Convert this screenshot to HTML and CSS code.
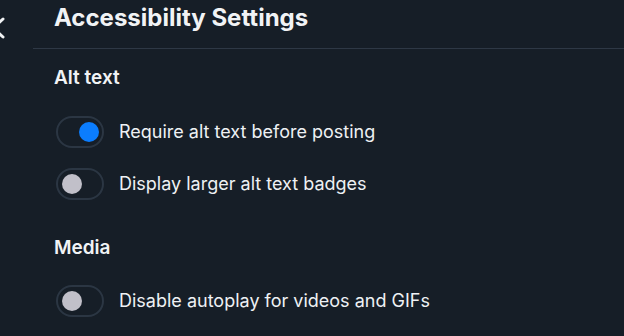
FILE: index.html
```html
<!DOCTYPE html>
<html>
<head>
<meta charset="utf-8">
<link rel="stylesheet" href="styles.css">
</head>
<body>
<div class="page">
  <aside class="rail">
    <svg class="back" width="20" height="40" viewBox="0 0 20 40"><path d="M3 19 L-7 28 L3 37" fill="none" stroke="#f1f3f5" stroke-width="3" stroke-linecap="round" stroke-linejoin="round"/></svg>
  </aside>
  <main class="main">
    <header class="header">
      <h1 class="title">Accessibility Settings</h1>
    </header>
    <section class="section">
      <h2 class="section-title">Alt text</h2>
      <div class="rows">
        <label class="row"><span class="toggle on"><span class="knob"></span></span><span class="label">Require alt text before posting</span></label>
        <label class="row"><span class="toggle"><span class="knob"></span></span><span class="label">Display larger alt text badges</span></label>
      </div>
    </section>
    <section class="section">
      <h2 class="section-title">Media</h2>
      <div class="rows">
        <label class="row"><span class="toggle"><span class="knob"></span></span><span class="label">Disable autoplay for videos and GIFs</span></label>
      </div>
    </section>
  </main>
</div>
</body>
</html>
```
FILE: styles.css
```css
* { box-sizing: border-box; }
html, body { margin: 0; padding: 0; }
body {
  background: #161e27;
  color: #f1f3f5;
  font-family: Inter, "Noto Sans", sans-serif;
  width: 624px;
  height: 336px;
  overflow: hidden;
}
.page { display: flex; height: 336px; }
.rail { width: 33px; flex: none; position: relative; }
.back { position: absolute; left: 0; top: 0; }
.main { flex: 1; }
.header {
  height: 49px;
  border-bottom: 1px solid #2e3845;
  padding: 0 0 0 21px;
}
.title {
  margin: 0;
  font-size: 24px;
  font-weight: 700;
  line-height: 36px;
}
.section { padding: 0 0 0 21px; }
.section-title {
  margin: 17px 0 0;
  font-size: 19px;
  font-weight: 600;
  line-height: 24px;
}
.section + .section .section-title { margin-top: 36px; }
.rows { display: flex; flex-direction: column; gap: 20px; margin-top: 26px; }
.section + .section .rows { margin-top: 25px; }
.row { display: flex; align-items: center; gap: 15px; height: 32px; margin-left: 2px; }
.toggle {
  width: 48px; height: 32px;
  border: 2px solid #2b3643;
  border-radius: 16px;
  display: flex; align-items: center;
  padding: 0 3px 0 4px;
  flex: none;
}
.knob { width: 20px; height: 20px; border-radius: 50%; background: #c1c0c9; }
.toggle.on { justify-content: flex-end; }
.toggle.on .knob { background: #0b7dfe; }
.label { font-size: 18px; line-height: 22px; color: #eef1f4; }
```
